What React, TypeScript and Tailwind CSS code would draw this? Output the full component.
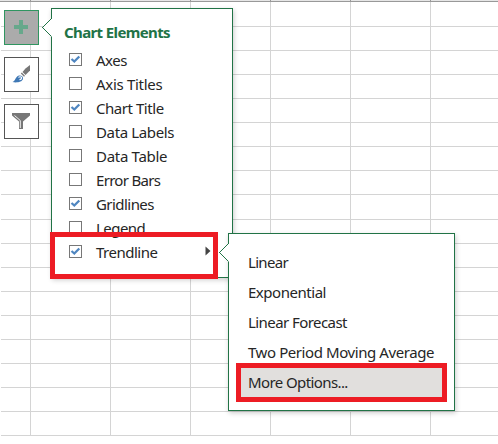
import React from 'react';

type Item = { label: string; tracking: string; checked?: boolean };

const elements: Item[] = [
  { label: 'Axes', tracking: 'tracking-[-0.5px]', checked: true },
  { label: 'Axis Titles', tracking: 'tracking-[-0.3px]' },
  { label: 'Chart Title', tracking: 'tracking-[-0.45px]', checked: true },
  { label: 'Data Labels', tracking: 'tracking-[-0.37px]' },
  { label: 'Data Table', tracking: 'tracking-[-0.3px]' },
  { label: 'Error Bars', tracking: 'tracking-[-0.7px]' },
  { label: 'Gridlines', tracking: 'tracking-[-0.55px]', checked: true },
  { label: 'Legend', tracking: 'tracking-[-0.55px]' },
  { label: 'Trendline', tracking: 'tracking-[-0.5px]', checked: true },
];

const trendlines: Item[] = [
  { label: 'Linear', tracking: 'tracking-[-0.7px]' },
  { label: 'Exponential', tracking: 'tracking-[-0.47px]' },
  { label: 'Linear Forecast', tracking: 'tracking-[-0.57px]' },
  { label: 'Two Period Moving Average', tracking: 'tracking-[-0.42px]' },
  { label: 'More Options...', tracking: 'tracking-[-0.6px]' },
];

function Sheet() {
  return (
    <div className="flex h-[444px] flex-col pl-px">
      <div className="-ml-px flex h-[2px] shrink-0 border-b border-[#999999] bg-[#e6e6e6]">
        <div className="w-[31px] border-r border-[#999999]" />
        {[0, 1, 2, 3, 4].map((c) => (
          <div key={c} className="w-[80px] border-r border-[#999999]" />
        ))}
      </div>
      {Array.from({ length: 18 }, (_, r) => (
        <div
          key={r}
          className={`flex shrink-0 border-b border-[#d4d4d4] ${r === 0 || r === 8 ? 'h-[25px]' : 'h-[24px]'}`}
        >
          <div className="w-[30px] border-r border-[#d4d4d4]" />
          {[0, 1, 2, 3, 4].map((c) => (
            <div key={c} className="w-[80px] border-r border-[#d4d4d4]" />
          ))}
        </div>
      ))}
    </div>
  );
}

function CheckBox({ checked }: { checked?: boolean }) {
  return (
    <span className="flex size-[13px] shrink-0 border border-[#777777] bg-white">
      {checked && (
        <svg width="11" height="11" viewBox="0 0 11 11" fill="none">
          <path d="M1.500 5 4.300 7.500 9.300 2.500" stroke="#4f86c0" strokeWidth="2.300" />
        </svg>
      )}
    </span>
  );
}

function Pointer() {
  return (
    <svg className="absolute top-[9px] -left-[10px]" width="11" height="19" viewBox="0 0 11 19">
      <path d="M10 .5h-.5L.5 9.500l9 9h.5Z" fill="#fff" />
      <path d="M9.500.500.500 9.500l9 9" fill="none" stroke="#217346" shapeRendering="crispEdges" />
    </svg>
  );
}

export default function App() {
  return (
    <div className="relative h-[444px] w-[498px] overflow-hidden bg-white font-['Noto_Sans','Open_Sans',sans-serif] text-[15px] text-[#262626]">
      <Sheet />

      <div className="absolute top-[10px] left-[4px] flex flex-col gap-[12px]">
        <div className="flex size-[35px] items-center justify-center border border-[#2f9560] bg-[#ababab]">
          <svg width="33" height="33" viewBox="0 0 33 33">
            <path d="M14 9h4v5h5v4h-5v5h-4v-5H9v-4h5Z" fill="#67a88b" />
          </svg>
        </div>
        <div className="flex size-[35px] items-center justify-center border border-[#555555] bg-white">
          <svg width="33" height="33" viewBox="0 0 33 33">
            <path d="M25 7v5.500L20.500 17 17.500 14 20.500 10.500Z" fill="#777" />
            <path d="m16.300 15 3.200 3.200" stroke="#777" strokeWidth="1.300" />
            <path d="M7.500 24c3-.5 3-6.500 7-6.500 2.500 0 4 1.700 3.500 3.500C17 24.300 11 25 7.500 24Z" fill="#3f78b5" />
            <path d="M13.500 19.500c.8-1 2.500-1 3 .1s-.7 2-2 2.100" fill="none" stroke="#fff" strokeWidth="1.200" />
          </svg>
        </div>
        <div className="flex size-[35px] items-center justify-center border border-[#555555] bg-white">
          <svg width="33" height="33" viewBox="0 0 33 33">
            <path d="M7 8h18v2.500l-7 6V24h-4v-7.500l-7-6Z" fill="#777" />
            <path d="m9.500 10.500 5.800 5V23" fill="none" stroke="#fff" strokeWidth=".9" />
          </svg>
        </div>
      </div>

      <section className="absolute top-[8px] left-[51px] h-[270px] w-[182px] border border-[#217346] bg-white shadow-[1px_2px_5px_rgba(0,0,0,0.2)]">
        <Pointer />
        <h2 className="mt-[12px] ml-[12px] text-[15px] leading-[22px] font-bold tracking-[-0.62px] whitespace-nowrap text-[#217346]">
          Chart Elements
        </h2>
        <ul className="mt-[5px]">
          {elements.map((item) => (
            <li key={item.label} className="flex h-[24px] pl-[17px] leading-[24px]">
              <div className="mt-[5px] flex">
                <CheckBox checked={item.checked} />
              </div>
              <span className={`ml-[14px] whitespace-nowrap ${item.tracking}`}>{item.label}</span>
            </li>
          ))}
        </ul>
      </section>

      <div className="absolute top-[232px] left-[50px] flex h-[47px] w-[168px] justify-end border-[5px] border-[#ed1c24]">
        <svg className="mt-[9px] mr-[2px]" width="6" height="10" viewBox="0 0 6 10">
          <path d="M.5.500 5.500 5l-5 4.500Z" fill="#444" />
        </svg>
      </div>

      <section className="absolute top-[233px] left-[228px] flex h-[178px] w-[227px] flex-col border border-[#217346] bg-white pt-[13px] shadow-[1px_2px_5px_rgba(0,0,0,0.2)]">
        <Pointer />
        {trendlines.map((item, i) => (
          <div
            key={item.label}
            className={
              i === 4
                ? 'mt-[-4px] ml-[7px] flex h-[39px] w-[211px] items-center border-[5px] border-[#ed1c24] bg-[#e1dfdd] pl-[7px]'
                : 'flex h-[30px] items-center pl-[19px]'
            }
          >
            <span className={`whitespace-nowrap ${item.tracking}`}>{item.label}</span>
          </div>
        ))}
      </section>
    </div>
  );
}
